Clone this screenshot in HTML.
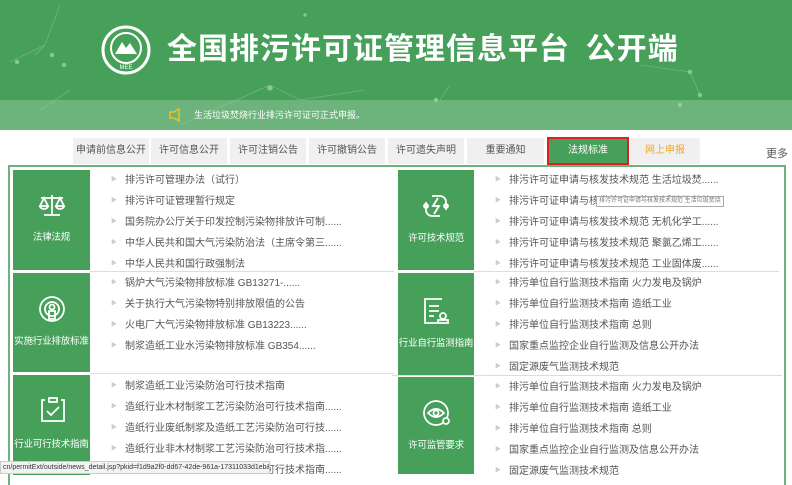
<!DOCTYPE html><html><head><meta charset="utf-8"><style>
*{margin:0;padding:0;box-sizing:border-box}
body{width:792px;height:474px;overflow:hidden;background:#fff;font-family:"Liberation Sans","Noto Sans CJK SC",sans-serif;position:relative;white-space:nowrap}
.hd{position:absolute;left:0;top:0;width:792px;height:100px;background:#46a05a}
.strip{position:absolute;left:0;top:100px;width:792px;height:30px;background:#6cb37c}
.title{position:absolute;left:167px;top:24px;color:#fff;font-size:30px;font-weight:bold;letter-spacing:1px;font-family:"Noto Sans CJK SC",sans-serif}
.notice{position:absolute;left:194px;top:108px;color:#fff;font-size:9px}
.tab{position:absolute;top:138px;height:26px;background:#f0f0f0;color:#555;font-size:10px;line-height:26px;text-align:center;overflow:hidden}
.box{position:absolute;left:8px;top:165px;width:778px;height:320px;border:2px solid #6cb37c;border-bottom:none}
.blk{position:absolute;background:#46a05a;color:#fff;font-size:9.5px;letter-spacing:-0.2px;text-align:center}
.blk span{position:absolute;left:0;width:100%}
.lst{position:absolute;font-size:10px;color:#555;line-height:20px}
.lst div:before{content:"▶";color:#ccc;font-size:6px;margin-right:8px;vertical-align:2px}
.sep{position:absolute;height:1px;background:#ddd}
</style></head><body>
<div class="hd"></div><div class="strip"></div>
<svg style="position:absolute;left:0;top:0" width="792" height="130"><g stroke="#8fcf9c" stroke-width=".6" fill="#a8dcb2" opacity=".7">
<line x1="10" y1="62" x2="45" y2="45"/><line x1="45" y1="45" x2="60" y2="5"/><line x1="45" y1="45" x2="35" y2="55"/><line x1="40" y1="110" x2="70" y2="90"/><line x1="180" y1="125" x2="270" y2="85"/><line x1="270" y1="85" x2="300" y2="100"/><line x1="300" y1="100" x2="365" y2="90"/><line x1="440" y1="100" x2="450" y2="85"/><line x1="640" y1="65" x2="690" y2="72"/><line x1="690" y1="72" x2="700" y2="95"/>
<circle cx="17" cy="62" r="2"/><circle cx="52" cy="55" r="2"/><circle cx="64" cy="65" r="2"/><circle cx="270" cy="88" r="2.5"/><circle cx="436" cy="100" r="2"/><circle cx="680" cy="105" r="2"/><circle cx="690" cy="72" r="2"/><circle cx="700" cy="95" r="2"/><circle cx="305" cy="15" r="1.5"/></g></svg>
<svg style="position:absolute;left:100px;top:24px" width="52" height="52"><circle cx="26" cy="26" r="23" fill="none" stroke="#fff" stroke-width="3"/><circle cx="26" cy="24" r="15" fill="none" stroke="#fff" stroke-width="2"/><path d="M15 30 L22 18 L26 24 L30 19 L37 30 Z" fill="#fff"/><text x="26" y="45" font-size="6" fill="#fff" text-anchor="middle" font-family="Liberation Sans">MEE</text></svg>
<div class="title">全国排污许可证管理信息平台&nbsp;&nbsp;公开端</div>
<svg style="position:absolute;left:168px;top:108px" width="18" height="14"><path d="M2 4h4l5-3v12l-5-3H2z" fill="none" stroke="#f0c020" stroke-width="1.5"/></svg>
<div class="notice">生活垃圾焚烧行业排污许可证可正式申报。</div>
<div class="tab" style="left:73px;width:76px">申请前信息公开</div>
<div class="tab" style="left:151px;width:76px">许可信息公开</div>
<div class="tab" style="left:230px;width:76px">许可注销公告</div>
<div class="tab" style="left:309px;width:76px">许可撤销公告</div>
<div class="tab" style="left:388px;width:76px">许可遗失声明</div>
<div class="tab" style="left:467px;width:77px">重要通知</div>
<div class="tab" style="left:547px;top:137px;height:28px;width:82px;background:#46a05a;color:#fff;border:2px solid #e02020;line-height:24px">法规标准</div>
<div class="tab" style="left:630px;width:70px;color:#f5a623">网上申报</div>
<div style="position:absolute;left:766px;top:145px;font-size:11px;color:#555">更多</div>
<div class="box"></div>
<div class="blk" style="left:13px;top:170px;width:77px;height:100px"><svg style="position:absolute;left:25px;top:22px" width="28" height="26" fill="none" stroke="#fff" stroke-width="1.8"><path d="M14 3v20M6 23h16M3 6h22M6 6l-4 8h8zM22 6l-4 8h8zM2 14a4 3 0 0 0 8 0M18 14a4 3 0 0 0 8 0"/></svg><span style="top:59px">法律法规</span></div>
<div class="blk" style="left:13px;top:273px;width:77px;height:99px"><svg style="position:absolute;left:25px;top:22px" width="28" height="28" fill="none" stroke="#fff" stroke-width="1.8"><circle cx="14" cy="14" r="12"/><circle cx="14" cy="14" r="7"/><circle cx="14" cy="12" r="2.5"/><path d="M11 16h6v8h-6z"/></svg><span style="top:60px">实施行业排放标准</span></div>
<div class="blk" style="left:13px;top:375px;width:77px;height:100px"><svg style="position:absolute;left:27px;top:20px" width="26" height="28" fill="none" stroke="#fff" stroke-width="1.8"><path d="M9 3h8v4H9zM5 5H2v21h22V5h-3M7 16l4 4 8-8"/></svg><span style="top:61px">行业可行技术指南</span></div>
<div class="blk" style="left:398px;top:170px;width:76px;height:100px"><svg style="position:absolute;left:24px;top:22px" width="28" height="28" fill="none" stroke="#fff" stroke-width="1.8"><path d="M10 4h8a6 6 0 0 1 6 6v8M18 24h-8a6 6 0 0 1-6-6v-8M16 6l-5 8h6l-5 8"/><circle cx="4" cy="14" r="2"/><circle cx="24" cy="14" r="2"/></svg><span style="top:60px">许可技术规范</span></div>
<div class="blk" style="left:398px;top:273px;width:76px;height:102px"><svg style="position:absolute;left:25px;top:24px" width="28" height="30" fill="none" stroke="#fff" stroke-width="1.8"><path d="M19 2H2v24h12M6 9h10M6 14h10M6 19h5"/><circle cx="20" cy="19" r="3"/><path d="M15 26h10v-3h-10z"/></svg><span style="top:62px">行业自行监测指南</span></div>
<div class="blk" style="left:398px;top:377px;width:76px;height:97px"><svg style="position:absolute;left:24px;top:22px" width="30" height="28" fill="none" stroke="#fff" stroke-width="1.8"><circle cx="14" cy="14" r="12"/><path d="M6 14q8-8 16 0q-8 8-16 0z"/><circle cx="14" cy="14" r="2.5"/><circle cx="24" cy="22" r="3" fill="#46a05a"/></svg><span style="top:60px">许可监管要求</span></div>
<div class="sep" style="left:90px;top:271px;width:304px"></div><div class="sep" style="left:90px;top:373px;width:304px"></div>
<div class="sep" style="left:474px;top:271px;width:305px"></div><div class="sep" style="left:392px;top:375px;width:390px"></div>
<div class="lst" style="left:111px;top:170px"><div>排污许可管理办法（试行）</div><div>排污许可证管理暂行规定</div><div>国务院办公厅关于印发控制污染物排放许可制......</div><div>中华人民共和国大气污染防治法（主席令第三......</div><div>中华人民共和国行政强制法</div></div>
<div class="lst" style="left:111px;top:273px"><div>锅炉大气污染物排放标准 GB13271-......</div><div>关于执行大气污染物特别排放限值的公告</div><div>火电厂大气污染物排放标准 GB13223......</div><div>制浆造纸工业水污染物排放标准 GB354......</div></div>
<div class="lst" style="left:111px;top:376px"><div>制浆造纸工业污染防治可行技术指南</div><div>造纸行业木材制浆工艺污染防治可行技术指南......</div><div>造纸行业废纸制浆及造纸工艺污染防治可行技......</div><div>造纸行业非木材制浆工艺污染防治可行技术指......</div><div>造纸行业制浆造纸工艺污染防治可行技术指南......</div></div>
<div class="lst" style="left:495px;top:170px"><div>排污许可证申请与核发技术规范 生活垃圾焚......</div><div>排污许可证申请与核发技术规范 生活垃圾焚烧</div><div>排污许可证申请与核发技术规范 无机化学工......</div><div>排污许可证申请与核发技术规范 聚氯乙烯工......</div><div>排污许可证申请与核发技术规范 工业固体废......</div></div>
<div class="lst" style="left:495px;top:273px"><div>排污单位自行监测技术指南 火力发电及锅炉</div><div>排污单位自行监测技术指南 造纸工业</div><div>排污单位自行监测技术指南 总则</div><div>国家重点监控企业自行监测及信息公开办法</div><div>固定源废气监测技术规范</div></div>
<div class="lst" style="left:495px;top:377px"><div>排污单位自行监测技术指南 火力发电及锅炉</div><div>排污单位自行监测技术指南 造纸工业</div><div>排污单位自行监测技术指南 总则</div><div>国家重点监控企业自行监测及信息公开办法</div><div>固定源废气监测技术规范</div></div>
<div style="position:absolute;left:596px;top:196px;font-size:6px;color:#777;background:#fff;border:1px solid #aaa;padding:0 2px;line-height:9px">排污许可证申请与核发技术规范 生活垃圾焚烧</div>
<div style="position:absolute;left:0;top:461px;width:270px;height:13px;background:#f3f3f3;border:1px solid #ccc;font-size:7px;color:#333;line-height:11px;padding-left:2px;overflow:hidden">cn/permitExt/outside/news_detail.jsp?pkid=f1d9a2f0-dd67-42de-961a-17311033d1eb&amp;type=XKJSGF</div>
</body></html>
